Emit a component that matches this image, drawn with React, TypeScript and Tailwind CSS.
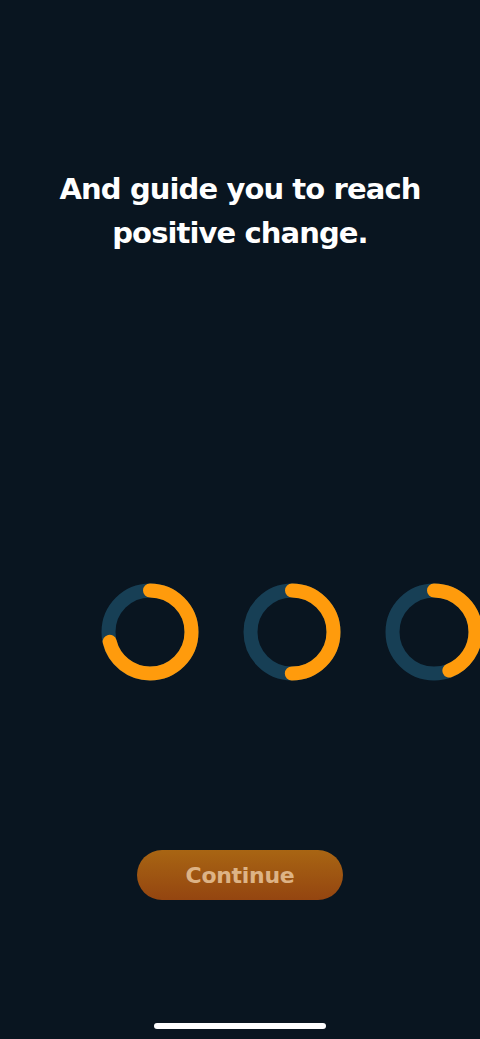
import React from "react";

const C = 2 * Math.PI * 41.5;

function Ring({ deg }: { deg: number }) {
  const len = (deg / 360) * C;
  return (
    <svg width="98" height="98" viewBox="0 0 98 98" className="shrink-0">
      <circle cx="49" cy="49" r="41.5" fill="none" stroke="#173f55" strokeWidth="14" />
      <circle
        cx="49"
        cy="49"
        r="41.5"
        fill="none"
        stroke="#ff9b0c"
        strokeWidth="14"
        strokeLinecap="round"
        strokeDasharray={`${len} ${C}`}
        transform="rotate(-90 49 49)"
      />
    </svg>
  );
}

export default function App() {
  return (
    <div
      className="relative flex h-[1039px] w-[480px] flex-col overflow-hidden bg-[#091520]"
      style={{ fontFamily: '"DejaVu Sans", "Open Sans", sans-serif' }}
    >
      <h1 className="pt-[167px] text-center text-[29px] font-bold leading-[44px] tracking-[-0.9px] text-white">
        And guide you to reach
        <br />
        positive change.
      </h1>
      <div className="mt-[328px] flex gap-[44px] pl-[101px]">
        <Ring deg={256} />
        <Ring deg={180} />
        <Ring deg={158} />
      </div>
      <div className="mt-[169px] flex justify-center">
        <button className="h-[50px] w-[206px] rounded-full bg-gradient-to-b from-[#a86513] to-[#944510] text-[22px] font-bold tracking-[-0.3px] text-[#ddb386]">
          Continue
        </button>
      </div>
      <div className="absolute bottom-[10px] left-[154px] h-[6px] w-[172px] rounded-full bg-white" />
    </div>
  );
}
